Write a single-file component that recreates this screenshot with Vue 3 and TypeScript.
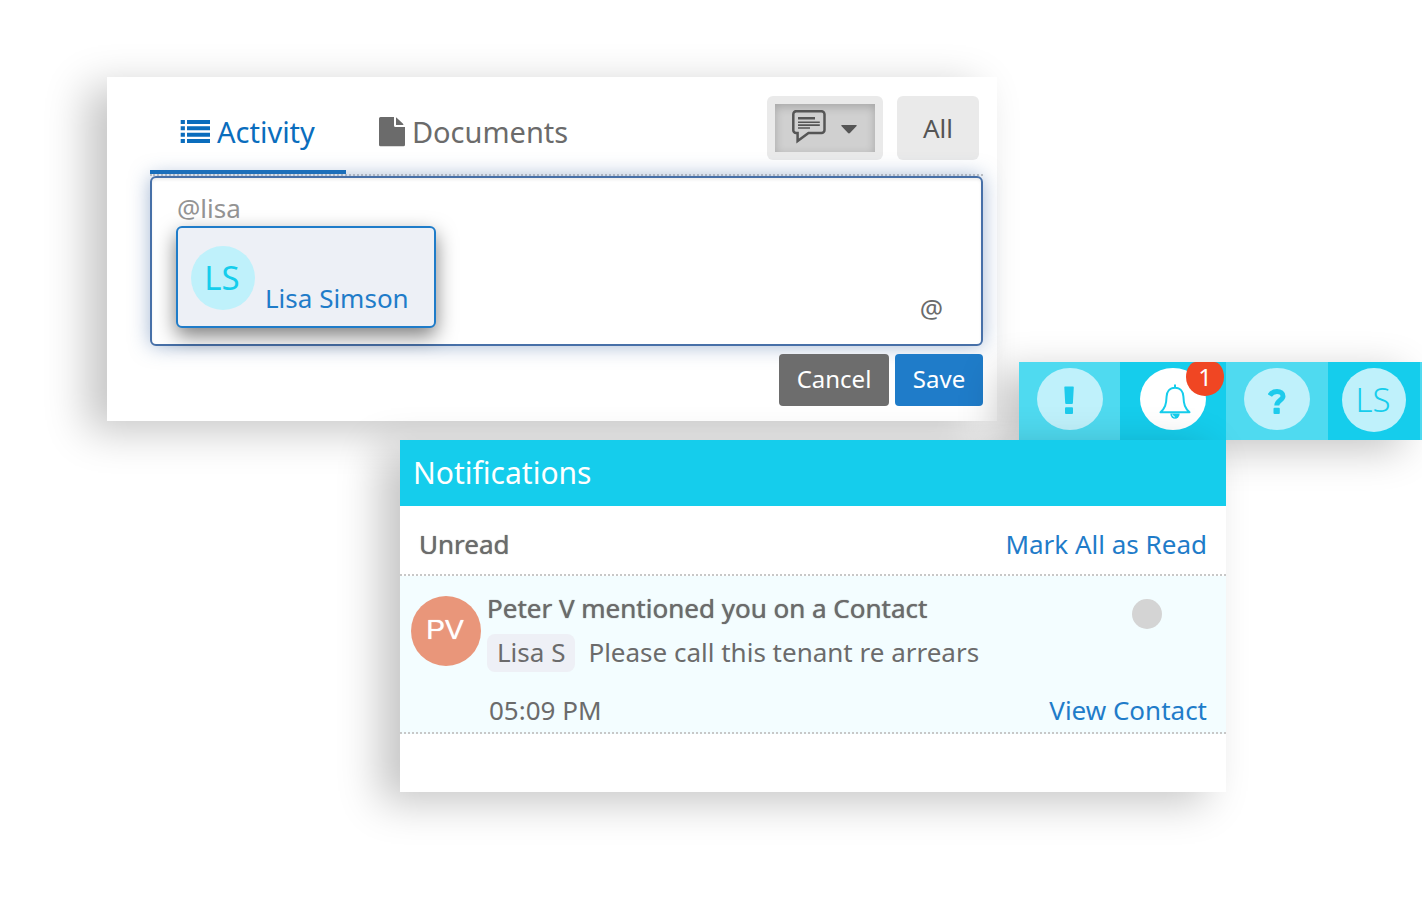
<script setup lang="ts">
import { ref } from 'vue'

interface Mention {
  initials: string
  name: string
}

interface Notice {
  initials: string
  title: string
  tag: string
  message: string
  time: string
}

const draft = ref<string>('@lisa')
const matches: Mention[] = [{ initials: 'LS', name: 'Lisa Simson' }]
const unreadCount = ref<number>(1)
const notices: Notice[] = [
  {
    initials: 'PV',
    title: 'Peter V mentioned you on a Contact',
    tag: 'Lisa S',
    message: 'Please call this tenant re arrears',
    time: '05:09 PM',
  },
]
</script>

<template>
  <main class="stage">
    <div class="upper">
      <section class="composer" aria-label="Activity composer">
        <header class="composer-head">
          <nav class="tabs">
            <a class="tab active" href="#activity">
              <svg width="30" height="24" viewBox="0 0 30 24" fill="currentColor" aria-hidden="true">
                <path d="M.7 0h4.200v4H.7zM7 0h23v4H7zM.7 6.300h4.200v4H.7zM7 6.300h23v4H7zM.7 12.700h4.200v4H.7zM7 12.700h23v4H7zM.7 19h4.200v4H.7zM7 19h23v4H7z" />
              </svg>
              <span>Activity</span>
            </a>
            <a class="tab" href="#documents">
              <svg width="26" height="30" viewBox="0 0 26 30" fill="currentColor" aria-hidden="true">
                <path d="M1.500 0H15v8.500A1.500 1.500 0 0 0 16.500 10H26v17.800a1.500 1.500 0 0 1-1.500 1.500h-23A1.500 1.500 0 0 1 0 27.800V1.500A1.500 1.500 0 0 1 1.500 0z" />
                <path d="M17 .6c.5.100 1 .4 1.400.8L23.800 6.600c.4.400.6.900.7 1.400H17z" />
              </svg>
              <span>Documents</span>
            </a>
          </nav>
          <div class="filters">
            <button class="filter filter-type" type="button" aria-label="Comment type">
              <span class="pressed">
                <svg width="34" height="34" viewBox="0 0 34 34" fill="none" aria-hidden="true">
                  <path d="M4.500 1.200H29.500A3 3 0 0 1 32.500 4.200V20A3 3 0 0 1 29.500 23H16.500L5.600 31V23H4.200A2.800 2.800 0 0 1 1.300 20V4.200A3 3 0 0 1 4.500 1.200z" stroke="#555" stroke-width="2.500" />
                  <path d="M6 7h17v2.600H6zM6 11.400h21.800v1.600H6zM6 14.200h21.800v1.700H6zM6 17.200h12v1.500H6z" fill="#555" />
                </svg>
                <svg class="caret" width="16" height="9" viewBox="0 0 16 9" fill="#555" aria-hidden="true">
                  <path d="M.4 0h15.200v1L9.200 7.700a1.600 1.600 0 0 1-2.400 0L.4 1z" />
                </svg>
              </span>
            </button>
            <button class="filter filter-all" type="button">All</button>
          </div>
        </header>

        <div class="editor">
          <textarea v-model="draft" aria-label="Comment" spellcheck="false"></textarea>
          <button class="at" type="button" aria-label="Mention someone">@</button>
          <div class="suggestions">
            <button v-for="m in matches" :key="m.name" class="suggestion" type="button">
              <span class="initials">{{ m.initials }}</span>
              <span class="suggestion-name">{{ m.name }}</span>
            </button>
          </div>
        </div>

        <footer class="actions">
          <button class="btn cancel" type="button">Cancel</button>
          <button class="btn save" type="button">Save</button>
        </footer>
      </section>

      <nav class="toolbar" aria-label="Account toolbar">
        <button class="tool" type="button" aria-label="Alerts">
          <span class="disc">
            <svg class="exclamation" width="10" height="28" viewBox="0 0 10 28" fill="#1dcbec" aria-hidden="true">
              <path d="M1 .5h8q.8 0 .8.800L8.900 17q0 1-1 1H2.200q-1 0-1-1L.3 1.300Q.3.500 1 .5z" />
              <rect x="1" y="21.200" width="8" height="6.800" rx="1" />
            </svg>
          </span>
        </button>
        <button class="tool strong" type="button" aria-label="Notifications">
          <span class="disc white">
            <svg class="bell" width="32" height="36" viewBox="0 0 32 36" fill="none" stroke="#15cdec" stroke-width="2" aria-hidden="true">
              <path d="M16 .5V4M16 3.700C10.500 3.700 7.800 8 7.600 12.500C7.300 20.500 6 24 1.500 28.200H30.500C26 24 24.700 20.500 24.400 12.500C24.200 8 21.500 3.700 16 3.700z" stroke-linejoin="round" />
              <path d="M11.300 29.500a4.700 5.200 0 0 0 9.400 0z" fill="#15cdec" stroke="none" />
              <path d="M13.400 30.500q.4 2 2.400 2.500" stroke="#fff" stroke-width="1" />
            </svg>
          </span>
          <span class="badge">{{ unreadCount }}</span>
        </button>
        <button class="tool" type="button" aria-label="Help">
          <span class="disc">
            <svg class="question" width="18" height="25" viewBox="0 0 18 25" fill="none" aria-hidden="true">
              <path d="M1.800 6.500C3.500 3.700 6 2.500 9 2.500c3.500 0 6 2 6 4.700 0 4-6.200 4.300-6.200 9.300" stroke="#1dcbec" stroke-width="5" />
              <rect x="5.500" y="18.700" width="6.300" height="6.300" rx="1" fill="#1dcbec" />
            </svg>
          </span>
        </button>
        <button class="tool strong" type="button" aria-label="Profile">
          <span class="initials">LS</span>
        </button>
      </nav>
    </div>

    <div class="lower">
      <section class="notifications" aria-labelledby="notifications-title">
        <h2 id="notifications-title">Notifications</h2>
        <div class="subhead">
          <h3>Unread</h3>
          <a href="#read">Mark All as Read</a>
        </div>
        <article v-for="n in notices" :key="n.title" class="notice">
          <span class="person">{{ n.initials }}</span>
          <div class="notice-body">
            <div class="notice-title">{{ n.title }}</div>
            <p class="notice-message">
              <span class="tag">{{ n.tag }}</span>
              <span>{{ n.message }}</span>
            </p>
            <div class="notice-foot">
              <time>{{ n.time }}</time>
              <a href="#contact">View Contact</a>
            </div>
          </div>
          <button class="dot" type="button" aria-label="Mark as read"></button>
        </article>
      </section>
    </div>
  </main>
</template>

<style>
body {
  margin: 0;
  background: #fff;
}
</style>

<style scoped>
.stage {
  --panel-shadow: -20px 10px 40px rgba(0, 0, 0, 0.23);
  box-sizing: border-box;
  min-height: 100vh;
  padding: 77px 0 64px;
  overflow: hidden;
  font-family: "Noto Sans", "Open Sans", sans-serif;
  font-size: 26px;
  line-height: 36px;
  color: #6b6b6b;
}

.stage *,
.stage *::before {
  box-sizing: border-box;
}

button,
textarea {
  margin: 0;
  padding: 0;
  border: 0;
  background: none;
  color: inherit;
  font: inherit;
}

button {
  cursor: pointer;
}

a {
  color: #1f7cc9;
  text-decoration: none;
}

svg {
  display: block;
  flex: none;
}

.upper {
  display: grid;
  grid-template-columns: 890fr 403fr;
  column-gap: 22px;
  align-items: end;
  padding-left: 107px;
}

/* Composer */
.composer {
  margin-bottom: 19px;
  padding: 19px 14px 15px 43px;
  background: #fff;
  box-shadow: var(--panel-shadow);
}

.composer-head {
  display: flex;
  justify-content: space-between;
  border-bottom: 2px dotted #c8c8c8;
}

.tabs {
  display: flex;
  gap: 3px;
}

.tab {
  display: flex;
  align-items: center;
  gap: 7px;
  padding: 0 31px 3px 30px;
  border-bottom: 4px solid transparent;
  color: #6b6b6b;
  font-size: 29px;
}

.tab.active {
  border-bottom-color: #136fbf;
  color: #0a6dbd;
}

.filters {
  display: flex;
  gap: 14px;
  margin: 0 4px 14px 0;
}

.filter {
  height: 64px;
  border-radius: 6px;
  background: #eaeaea;
  color: #555;
}

.filter-type {
  width: 116px;
  padding: 8px;
}

.filter-all {
  width: 82px;
}

.pressed {
  display: flex;
  align-items: flex-start;
  justify-content: space-between;
  height: 48px;
  padding: 6px 18px 0 17px;
  background: #d0d0d0;
  box-shadow: inset 0 3px 10px rgba(0, 0, 0, 0.2);
}

.caret {
  margin-top: 15px;
}

.editor {
  position: relative;
  display: flex;
  align-items: flex-end;
  height: 170px;
  border: 2px solid #4770a8;
  border-radius: 6px;
  background: #fff;
  box-shadow: 0 0 20px rgba(71, 112, 168, 0.5), inset 0 2px 3px rgba(0, 0, 0, 0.07);
}

textarea {
  flex: 1;
  min-width: 0;
  height: 100%;
  padding: 12px 0 0 25px;
  outline: 0;
  resize: none;
  color: #949494;
}

.at {
  margin: 0 38px 18px 0;
}

.suggestions {
  position: absolute;
  top: 48px;
  left: 24px;
  width: 260px;
  border: 2px solid #1f7cc9;
  border-radius: 6px;
  background: #edf0f6;
  box-shadow: 0 8px 20px rgba(0, 0, 0, 0.5);
}

.suggestion {
  display: flex;
  align-items: flex-end;
  gap: 10px;
  width: 100%;
  padding: 18px 13px 16px;
  color: #1f7cc9;
  line-height: 24px;
  white-space: nowrap;
}

.initials {
  display: grid;
  place-items: center;
  flex: none;
  width: 64px;
  height: 64px;
  padding-right: 2px;
  border-radius: 50%;
  background: #bff1fb;
  color: #15cdec;
  font-size: 33px;
}

.toolbar .initials {
  font-weight: 350;
}

.actions {
  display: flex;
  justify-content: flex-end;
  gap: 6px;
  margin-top: 8px;
}

.btn {
  position: relative;
  height: 52px;
  padding-bottom: 2px;
  border-radius: 4px;
  color: #fff;
  font-size: 24px;
}

.cancel {
  width: 110px;
  background: #6d6d6d;
}

.save {
  width: 88px;
  background: #1f7cc9;
}

/* Toolbar */
.toolbar {
  position: relative;
  display: grid;
  grid-template-columns: 101fr 106fr 102fr 92fr;
  height: 78px;
  border-right: 2px solid #4fdaf0;
  background: #4fdaf0;
  box-shadow: var(--panel-shadow);
}

.tool {
  position: relative;
  display: flex;
  justify-content: center;
  align-items: flex-start;
  padding-top: 6px;
}

.tool.strong {
  background: #15cdec;
}

.disc {
  display: grid;
  place-items: center;
  width: 66px;
  height: 62px;
  border-radius: 50%;
  background: #bff1fb;
}

.disc.white {
  background: #fff;
}

.exclamation {
  margin: 2px 2px 0 0;
}

.bell {
  margin: 6px 0 0 4px;
}

.question {
  margin-top: 5px;
}

.badge {
  position: absolute;
  top: 0;
  right: 2px;
  width: 38px;
  height: 34px;
  border-radius: 10px 10px 19px 19px / 15px 15px 19px 19px;
  background: #f04623;
  color: #fff;
  font-size: 24px;
  line-height: 30px;
  text-align: center;
}

/* Notifications */
.lower {
  display: grid;
  grid-template-columns: 400fr 826fr 196fr;
}

.notifications {
  position: relative;
  grid-column: 2;
  padding-bottom: 58px;
  background: #fff;
  box-shadow: var(--panel-shadow);
}

h2,
h3,
p {
  margin: 0;
  font-weight: 400;
}

h2 {
  padding: 0 13px;
  background: #15cdec;
  color: #fff;
  font-size: 30px;
  line-height: 66px;
}

.subhead {
  display: flex;
  justify-content: space-between;
  padding: 20px 19px 12px;
  border-bottom: 2px dotted #c8c8c8;
}

h3 {
  font-size: 26px;
}

h3,
.notice-title {
  text-shadow: 0 0 1px currentColor;
}

.notice {
  display: flex;
  align-items: flex-start;
  position: relative;
  gap: 6px;
  padding: 14px 19px 4px 11px;
  border-bottom: 2px dotted #c8c8c8;
  background: #f3fdff;
}

.person {
  display: grid;
  place-items: center;
  flex: none;
  width: 70px;
  height: 70px;
  margin-top: 6px;
  padding: 0 2px 2px 0;
  border-radius: 50%;
  background: #e9967a;
  color: #fff;
  font-family: "Liberation Sans", sans-serif;
  font-size: 28px;
  text-shadow: 0 0 1px currentColor;
}

.notice-body {
  flex: 1;
  min-width: 0;
}

.notice-message {
  display: flex;
  align-items: center;
  gap: 13px;
  margin: 8px 0 20px;
  line-height: 34px;
}

.tag {
  padding: 1px 10px 3px;
  border-radius: 8px;
  background: #eef0f6;
}

.notice-message span + span {
  padding-bottom: 2px;
}

.notice-foot {
  display: flex;
  justify-content: space-between;
  padding-left: 2px;
}

.dot {
  position: absolute;
  top: 23px;
  right: 64px;
  width: 30px;
  height: 30px;
  border-radius: 50%;
  background: #d4d4d4;
}
</style>
